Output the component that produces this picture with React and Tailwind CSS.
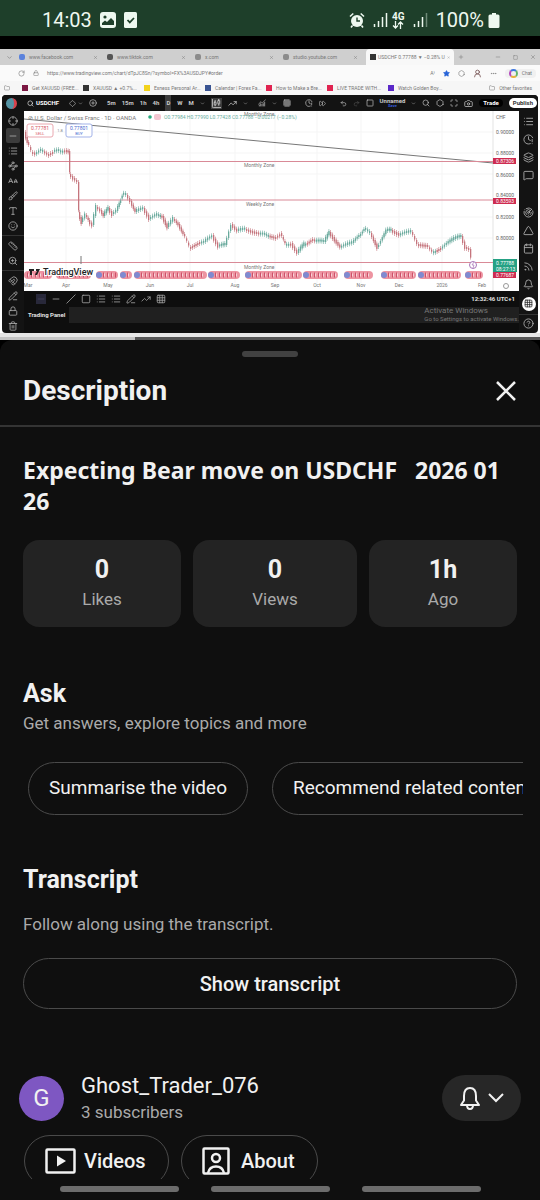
import {
    ALargeSmall, Bell, Brush, Calendar, Camera, ChartCandlestick, ChartNoAxesCombined, ChevronDown, CircleHelp,
    CirclePlus, ClockAlert, Crosshair, Diamond, Ellipsis, FastForward, Folder, Grid3x3, Hexagon, Layers, List, Lock,
    Magnet, Maximize, MessageSquare, Minus, PencilLine, Plus, Radar, Redo2, RotateCw, Rss, Ruler, Search, Slash,
    Smile, Square, Star, Trash2, Triangle, TrendingUp, Type, Undo2, UserRound, Waypoints, X, ZoomIn,
} from "lucide-react";

const tabs = [
    { title: "www.facebook.com", color: "bg-[#5b82dc]", width: "w-[88px]" },
    { title: "www.tiktok.com", color: "bg-[#555555]", width: "w-[88px]" },
    { title: "x.com", color: "bg-[#8c8c8c]", width: "w-[88px]" },
    { title: "studio.youtube.com", color: "bg-[#8c8c8c]", width: "w-[84px]" },
];

const bookmarks = [
    { title: "Get XAUUSD (FREE...", color: "bg-[#7b1742]" },
    { title: "XAUUSD ▲ +0.7%...", color: "bg-[#333333]" },
    { title: "Exness Personal Ar...", color: "bg-[#f2d21b]" },
    { title: "Calendar | Forex Fa...", color: "bg-[#3a5492]" },
    { title: "How to Make a Bre...", color: "bg-[#e02350]" },
    { title: "LIVE TRADE WITH...", color: "bg-[#e02350]" },
    { title: "Watch Golden Boy...", color: "bg-[#5a28c8]" },
];

const leftTools = [
    [Crosshair, Minus, List, Waypoints, ALargeSmall, Brush, Type, Smile],
    [Ruler, ZoomIn],
    [Magnet, PencilLine, Lock, Trash2],
];

const rightTools = [
    [List, ClockAlert, Layers, MessageSquare],
    [Radar, Triangle, Calendar, Rss, Bell],
];

const drawTools = [Minus, Minus, Slash, Square, List, List, PencilLine, TrendingUp, Grid3x3];

// x, y of the closing price along the year
const prices = [
    [25, 132], [28, 142], [32, 152], [36, 153], [42, 150], [48, 154], [54, 151], [60, 151], [66, 150], [69, 151],
    [70, 174], [74, 178], [78, 182], [79, 212], [82, 222], [86, 215], [89, 220], [93, 225], [97, 207], [101, 210],
    [104, 216], [109, 208], [113, 214], [117, 211], [120, 203], [123, 194], [127, 195], [131, 201], [136, 212],
    [144, 208], [150, 218], [158, 215], [163, 216], [168, 227], [174, 219], [179, 224], [184, 234], [190, 247],
    [199, 242], [205, 242], [213, 235], [219, 246], [226, 245], [232, 224], [238, 231], [246, 229], [256, 232],
    [264, 234], [275, 237], [281, 233], [286, 245], [292, 243], [298, 253], [305, 244], [312, 239], [325, 242],
    [330, 232], [341, 247], [353, 243], [360, 234], [365, 228], [371, 233], [378, 247], [387, 231], [392, 230],
    [400, 234], [412, 232], [418, 244], [427, 245], [433, 252], [440, 248], [455, 239], [462, 236], [466, 247],
    [470, 249], [472, 259],
];

const candles = [];
for (let i = 1; i < prices.length; i++) {
    const [x0, y0] = prices[i - 1];
    const [x1, y1] = prices[i];
    const steps = Math.max(1, Math.round((x1 - x0) / 2));
    for (let s = 0; s < steps; s++) {
        const wobble = Math.sin((i * 7 + s) * 12.9) * 2;
        const open = y0 + ((y1 - y0) * s) / steps;
        const close = y0 + ((y1 - y0) * (s + 1)) / steps + wobble;
        candles.push({
            x: x0 + ((x1 - x0) * s) / steps,
            top: Math.min(open, close),
            size: Math.max(2, Math.abs(close - open)),
            up: close < open,
        });
    }
}

const eventGroups = [[24, 52], [56, 91], [96, 118], [120, 132], [134, 207], [208, 240], [245, 302], [303, 338], [344, 373], [381, 416], [418, 461], [465, 483]];

const months = [["Mar", 28], ["Apr", 66], ["May", 108], ["Jun", 150], ["Jul", 190], ["Aug", 235], ["Sep", 275], ["Oct", 317], ["Nov", 361], ["Dec", 399], ["2026", 442], ["Feb", 482]];

const StatusBar = () => {
    return (
        <header className="h-9 bg-[#1e3f2a] text-[#eef8f0] flex items-center justify-between pl-[42px] pr-10">
            <div className="flex items-center gap-2 pt-1">
                <span className="text-xl leading-6">14:03</span>
                <svg width="16" height="16" viewBox="0 0 16 16">
                    <rect width="16" height="16" rx="3" fill="currentColor" />
                    <circle cx="5" cy="5" r="1.6" fill="#1e3f2a" />
                    <path d="M2 13V11l3-2.5 2 1.5 4-4 3 3v4z" fill="#1e3f2a" />
                </svg>
                <svg width="14" height="16" viewBox="0 0 14 16">
                    <rect width="13" height="16" rx="1.5" fill="currentColor" />
                    <path d="m3.5 8 2.3 2.4L10 6" fill="none" stroke="#1e3f2a" strokeWidth="1.8" />
                </svg>
            </div>
            <div className="flex items-center pt-1">
                <svg width="16" height="16" viewBox="0 0 16 16" className="mr-2">
                    <circle cx="8" cy="9" r="6" fill="currentColor" />
                    <path d="M1 4.5 4.3 1.5M15 4.5l-3.3-3M3.5 13.500 2 15.5M12.5 13.500 14 15.5" stroke="currentColor" strokeWidth="1.6" />
                    <path d="M8 5.5V9h3" fill="none" stroke="#1e3f2a" strokeWidth="1.4" />
                </svg>
                <svg width="15" height="16" viewBox="0 0 15 16" className="mr-1">
                    <path d="M1.5 12v3M5.5 9v6M9.5 5v10M13.5 1v14" stroke="currentColor" strokeWidth="1.5" />
                </svg>
                <span className="mr-2 flex flex-col items-center text-[10px] leading-[9px] font-bold">
                    4G
                    <svg width="12" height="8" viewBox="0 0 12 8">
                        <path d="M3.5 0v7M1 4.5 3.5 7 6 4.5M8.5 8V1M6 3.5 8.5 1 11 3.5" fill="none" stroke="currentColor" strokeWidth="1.3" />
                    </svg>
                </span>
                <svg width="15" height="16" viewBox="0 0 15 16" className="mr-2">
                    <path d="M1.5 12v3M5.5 9v6M9.5 5v10" stroke="currentColor" strokeWidth="1.5" />
                    <path d="M13.5 1v14" stroke="#6f8a78" strokeWidth="1.5" />
                </svg>
                <span className="text-xl leading-6 mr-1">100%</span>
                <svg width="12" height="15" viewBox="0 0 12 15">
                    <path d="M4 0h4v1.5h2A1.5 1.5 0 0 1 11.5 3v10.5A1.5 1.5 0 0 1 10 15H2a1.5 1.5 0 0 1-1.5-1.5V3A1.5 1.5 0 0 1 2 1.5h2z" fill="currentColor" />
                </svg>
            </div>
        </header>
    );
};

const BrowserBar = () => {
    return (
        <div className="text-[#777777] text-[5px] leading-[8px] whitespace-nowrap">
            <div className="h-4 bg-[#cfcfcf] flex items-center">
                <div className="w-[18px] shrink-0 flex justify-center"><ChevronDown size={7} /></div>
                {tabs.map((tab) => (
                    <div key={tab.title} className={`${tab.width} shrink-0 flex items-center gap-1 pr-2 pl-px`}>
                        <span className={`size-[6px] rounded-xs ${tab.color}`} />
                        <span className="flex-1">{tab.title}</span>
                        <X size={5} />
                    </div>
                ))}
                <div className="h-full w-[88px] shrink-0 rounded-t-sm bg-[#f8f8f8] flex items-center gap-[2px] px-1">
                    <span className="size-[6px] shrink-0 bg-[#333333]" />
                    <span className="flex-1">USDCHF 0.77788 ▼ −0.28% U</span>
                    <X size={5} />
                </div>
                <Plus size={6} className="ml-1" />
                <div className="ml-auto flex items-center gap-3 pr-1"><Minus size={6} /><Square size={5} /><X size={6} /></div>
            </div>
            <div className="h-4 bg-[#fafafa] flex items-center gap-2 pl-[18px] pr-1">
                <RotateCw size={7} />
                <Lock size={6} />
                <span className="flex-1">https://www.tradingview.com/chart/dTpJC8Sn/?symbol=FX%3AUSDJPY#order</span>
                <span>A⁾</span>
                <Star size={7} className="fill-[#2764d8] text-[#2764d8]" />
                <Hexagon size={7} />
                <UserRound size={9} className="text-[#6b4545]" />
                <Ellipsis size={7} />
                <div className="flex items-center gap-1 rounded-sm bg-[#f0f0f0] px-1">
                    <span className="size-[9px] rounded-full border-2 border-t-[#3c77df] border-r-[#62b56b] border-b-[#e7b13c] border-l-[#b44bbf]" />
                    Chat
                </div>
            </div>
            <div className="h-[14px] bg-[#f6f6f6] flex items-center pl-1">
                <Folder size={6} className="mr-3 shrink-0" />
                {bookmarks.map((mark) => (
                    <div key={mark.title} className="w-[61px] shrink-0 flex items-center gap-1">
                        <span className={`size-[6px] shrink-0 ${mark.color}`} />
                        {mark.title}
                    </div>
                ))}
                <span className="ml-auto flex shrink-0 items-center gap-1 pr-2"><Folder size={6} />Other favorites</span>
            </div>
        </div>
    );
};

const ChartToolbar = () => {
    return (
        <div className="h-4 bg-[#131313] text-[#c9c9c9] text-[6px] leading-[8px] font-bold flex items-center justify-between pl-1 pr-px whitespace-nowrap">
            <div className="flex items-center gap-[6px]">
                <span className="size-[11px] rounded-full bg-[#5594a5] border-r-3 border-[#d8434d]" />
                <span className="flex items-center gap-[2px] pl-1 text-white"><Search size={7} />USDCHF</span>
                <Diamond size={7} className="ml-1" />
                <ChevronDown size={5} className="-ml-1" />
                <CirclePlus size={8} />
                <span className="ml-1">5m</span>
                <span>15m</span>
                <span>1h</span>
                <span>4h</span>
                <span className="bg-[#3c3c3c] px-px py-1">D</span>
                <span>W</span>
                <span>M</span>
                <ChevronDown size={5} />
                <ChartCandlestick size={11} className="bg-[#3c3c3c]" />
                <TrendingUp size={9} />
                <ChevronDown size={5} />
                <ChartNoAxesCombined size={8} className="ml-1" />
                <ChevronDown size={5} />
                <Grid3x3 size={8} />
                <ClockAlert size={8} className="ml-2" />
                <FastForward size={7} />
                <Undo2 size={7} className="ml-2" />
                <Redo2 size={7} className="text-[#555555]" />
            </div>
            <div className="flex items-center gap-[6px]">
                <Square size={8} />
                <span className="flex flex-col items-center leading-[6px]">Unnamed<span className="text-[4px] leading-[4px] text-[#345cdf]">Save</span></span>
                <ChevronDown size={5} />
                <Search size={8} />
                <Hexagon size={8} />
                <Maximize size={8} />
                <Camera size={9} />
                <span className="rounded-full bg-black px-1 text-white">Trade</span>
                <span className="rounded-full bg-white px-1 py-px text-[#333333]">Publish</span>
            </div>
        </div>
    );
};

const PriceChart = () => {
    return (
        <svg viewBox="24 111 495 180" className="w-full bg-white" fontFamily="Roboto, sans-serif" fontSize="5">
            <path d="M66 111v172M108 111v172M150 111v172M190 111v172M235 111v172M275 111v172M317 111v172M361 111v172M399 111v172M442 111v172M24 132h469M24 153h469M24 174h469M24 217h469M24 238h469" stroke="#f5f5f5" />
            <path d="M493 111v180" stroke="#e3e3e3" />
            <path d="M24 119 493 163" stroke="#777777" />
            <path d="M24 161.5h469M24 200h469M24 262.5h469" stroke="#d98a97" />
            {candles.map((c, i) => (
                <g key={i} fill={c.up ? "#68a99c" : "#c5757d"}>
                    <rect x={c.x + 0.3} y={c.top - 2} width="0.6" height={c.size + 4} />
                    <rect x={c.x} y={c.top} width="1.3" height={c.size} />
                </g>
            ))}
            <path d="M81 256v8" stroke="#777777" />
            <g fill="#777777">
                <text x="244" y="116">Monthly Zone</text>
                <text x="244" y="167">Monthly Zone</text>
                <text x="246" y="206">Weekly Zone</text>
                <text x="244" y="269">Monthly Zone</text>
            </g>
            <text x="28" y="120" fontSize="6" fill="#777777">⊘ U.S. Dollar / Swiss Franc · 1D · OANDA</text>
            <circle cx="150" cy="117" r="1.8" fill="#28aa7d" />
            <rect x="154" y="114" width="7" height="6" rx="2" fill="#f3c5d0" />
            <text x="164" y="119" fill="#68ad9e">O0.77984 H0.77990 L0.77428 C0.77788 −0.00217 (−0.28%)</text>
            <g fill="white">
                <rect x="27" y="124" width="26" height="13" rx="2" stroke="#eaa8b0" />
                <rect x="66" y="124" width="26" height="13" rx="2" stroke="#a3b3e9" />
            </g>
            <g textAnchor="middle">
                <text x="40" y="130" fill="#d65362">0.77781</text>
                <text x="40" y="135" fill="#d65362" fontSize="4">SELL</text>
                <text x="60" y="132" fill="#888888" fontSize="4">1.8</text>
                <text x="79" y="130" fill="#4968cf">0.77801</text>
                <text x="79" y="135" fill="#4968cf" fontSize="4">BUY</text>
            </g>
            {eventGroups.map(([from, to]) => (
                <g key={from}>
                    <rect x={from} y="271" width={to - from} height="8" rx="4" fill="#ed94a1" />
                    <path d={`M${from + 3} 275H${to - 2}`} stroke="#cd5069" strokeWidth="5" strokeDasharray="1 3" />
                    <path d={`M${from + 4} 275H${to - 2}`} stroke="#ffffff" strokeWidth="3" strokeDasharray="1 3" opacity="0.6" />
                    {from > 90 && <circle cx={from + 3} cy="275" r="3" fill="#7f8ad0" />}
                </g>
            ))}
            <path d="M29 269h5v2h-2v4h-2v-4h-1zM36 269h4l-3 6h-2l2-4h-1z" fill="#222222" />
            <text x="43" y="275" fontSize="9" fontWeight="500" fill="#222222" stroke="#ffffff" strokeWidth="2" paintOrder="stroke">TradingView</text>
            <circle cx="473" cy="265" r="3.5" fill="white" stroke="#a875b8" />
            <path d="m474 262-2 3h2l-1 3" fill="none" stroke="#a875b8" strokeWidth="0.7" />
            <g fill="#777777" textAnchor="middle">
                {months.map(([label, x]) => (
                    <text key={label} x={x} y="287">{label}</text>
                ))}
            </g>
            <circle cx="506" cy="286" r="2.5" fill="none" stroke="#999999" />
            <g fill="#666666">
                <text x="496" y="119">CHF</text>
                <text x="496" y="134">0.90000</text>
                <text x="496" y="155">0.88000</text>
                <text x="496" y="177">0.86000</text>
                <text x="496" y="197">0.84000</text>
                <text x="496" y="219">0.82000</text>
                <text x="496" y="240">0.80000</text>
            </g>
            <path d="M493 158h23v6h-23zM493 198h23v6h-23zM493 272h23v6h-23z" fill="#ce2b50" />
            <path d="M493 259h24v13h-24z" fill="#25a184" />
            <g fill="white">
                <text x="496" y="163">0.87306</text>
                <text x="496" y="203">0.83593</text>
                <text x="496" y="265">0.77788</text>
                <text x="496" y="271">08:27:13</text>
                <text x="496" y="277">0.77687</text>
            </g>
        </svg>
    );
};

const ChartFooter = () => {
    return (
        <div className="flex-1 flex flex-col bg-[#0e0e0e] text-[#e1e1e1] text-[6px] leading-[8px]">
            <div className="h-4 flex items-center gap-[5px] pl-3 pr-1">
                {drawTools.map((Icon, i) => (
                    <Icon key={i} size={10} className={i === 0 ? "bg-[#28283a] text-[#45455e]" : "text-[#a0a0a0]"} />
                ))}
                <span className="ml-auto font-bold">12:32:46 UTC+1</span>
            </div>
            <div className="h-4 bg-[#202020] flex items-start justify-between">
                <span className="bg-[#0e0e0e] px-1 py-1 font-bold">Trading Panel</span>
                <span className="text-[#777777] whitespace-nowrap">
                    <span className="block text-[8px]">Activate Windows</span>
                    <span className="block">Go to Settings to activate Windows.</span>
                </span>
            </div>
        </div>
    );
};

const Video = () => {
    return (
        <section className="bg-white" aria-label="Video">
            <BrowserBar />
            <div className="mx-[2px] flex flex-col rounded-sm overflow-hidden bg-[#131313]">
                <ChartToolbar />
                <div className="flex text-[#a9a9a9]">
                    <div className="w-[22px] shrink-0 pt-[2px] flex flex-col">
                        {leftTools.map((group, g) => (
                            <div key={g} className={g > 0 ? "border-t border-[#333333] mt-[2px] pt-[2px]" : ""}>
                                {group.map((Icon, i) => (
                                    <div key={i} className={g === 0 && i === 1 ? "h-[15px] mx-1 rounded-xs bg-[#3c3c3c] flex items-center justify-center" : "h-[15px] flex items-center justify-center"}>
                                        <Icon size={10} />
                                    </div>
                                ))}
                            </div>
                        ))}
                    </div>
                    <div className="flex-1 min-w-0 flex flex-col">
                        <PriceChart />
                        <ChartFooter />
                    </div>
                    <div className="w-[19px] shrink-0 py-px flex flex-col justify-between">
                        {rightTools.map((group, g) => (
                            <div key={g} className={g > 0 ? "mt-4" : ""}>
                                {group.map((Icon, i) => (
                                    <div key={i} className="h-[18px] flex items-center justify-center"><Icon size={11} /></div>
                                ))}
                            </div>
                        ))}
                        <div className="mx-auto size-[14px] rounded-full bg-white text-[#222222] flex items-center justify-center"><Grid3x3 size={9} /></div>
                        <div className="h-[18px] border-t border-[#333333] flex items-center justify-center"><CircleHelp size={11} /></div>
                    </div>
                </div>
            </div>
            <div className="h-1 bg-[#e6e6e6]" />
            <div className="h-[3px] bg-[#555555]">
                <div className="h-full w-1/4 bg-[#c4c4c4]" />
            </div>
        </section>
    );
};

const Stat = ({ value, label }) => {
    return (
        <div className="h-[87px] rounded-2xl bg-[#232323] flex flex-col items-center pt-[15px]">
            <span className="text-[25px] leading-[30px] font-bold">{value}</span>
            <span className="text-[17px] leading-7 text-[#aaaaaa]">{label}</span>
        </div>
    );
};

const Channel = () => {
    return (
        <section className="pt-[63px]">
            <div className="flex items-center px-[19px]">
                <div className="size-[45px] rounded-full bg-[#7e57c2] flex items-center justify-center text-2xl">G</div>
                <div className="pl-[17px] flex-1">
                    <div className="text-[22px] leading-7">Ghost_Trader_076</div>
                    <div className="text-[17px] leading-6 text-[#aaaaaa]">3 subscribers</div>
                </div>
                <button aria-label="Notifications" className="h-[46px] w-[79px] rounded-full bg-[#272727] flex items-center justify-center gap-2">
                    <svg width="20" height="23" viewBox="0 0 20 23" fill="none" stroke="currentColor" strokeWidth="2" strokeLinejoin="round">
                        <path d="M4 9c0-5 2.300-8 6-8s6 3 6 8v4.500l3 4.500H1l3-4.500z" />
                        <path d="M7 18c0 2.500 1 4 3 4s3-1.500 3-4" />
                    </svg>
                    <svg width="16" height="10" viewBox="0 0 16 10" fill="none" stroke="currentColor" strokeWidth="2">
                        <path d="m1 1 7 7 7-7" />
                    </svg>
                </button>
            </div>
            <div className="h-[55px] pt-[11px] pl-6 flex gap-3 overflow-hidden text-xl font-medium">
                <button className="h-[52px] w-[145px] shrink-0 rounded-full border border-[#4a4a4a] flex items-center pl-5 gap-2">
                    <svg width="31" height="26" viewBox="0 0 31 26">
                        <rect x="1.5" y="1.5" width="28" height="23" rx="1" fill="none" stroke="currentColor" strokeWidth="2.5" />
                        <path d="M12 7.5v11l9-5.5z" fill="currentColor" />
                    </svg>
                    Videos
                </button>
                <button className="h-[52px] w-[137px] shrink-0 rounded-full border border-[#4a4a4a] flex items-center pl-5 gap-[11px]">
                    <svg width="28" height="28" viewBox="0 0 28 28" fill="none" stroke="currentColor" strokeWidth="2.5">
                        <rect x="1.5" y="1.5" width="25" height="25" rx="1" />
                        <circle cx="14" cy="11" r="4" />
                        <path d="M6 26c1-4.5 4-6.5 8-6.5s7 2 8 6.5" />
                    </svg>
                    About
                </button>
            </div>
        </section>
    );
};

const App = () => {
    return (
        <div className="min-h-screen flex flex-col bg-black text-[#f1f1f1] font-[Roboto,sans-serif]">
            <StatusBar />
            <div className="pt-[13px]">
                <Video />
            </div>
            <main className="flex-1 flex flex-col rounded-t-xl bg-[#0f0f0f]">
                <div className="mx-auto mt-[11px] h-[6px] w-14 rounded-full bg-[#414141]" />
                <div className="h-[70px] flex items-center justify-between pl-[23px] pr-6 border-b-2 border-[#343434]">
                    <h1 className="text-[28px] leading-8 font-bold">Description</h1>
                    <button aria-label="Close">
                        <svg width="20" height="20" viewBox="0 0 20 20" stroke="currentColor" strokeWidth="2.5">
                            <path d="m1 1 18 18M19 1 1 19" />
                        </svg>
                    </button>
                </div>
                <div className="px-[23px]">
                    <h2 className="pt-7 -mr-2 text-[23px] leading-[31px] font-bold font-['Noto_Sans',sans-serif] whitespace-pre-wrap">Expecting Bear move on USDCHF   2026 01 26</h2>
                    <div className="mt-[23px] grid grid-cols-[158fr_164fr_148fr] gap-3">
                        <Stat value="0" label="Likes" />
                        <Stat value="0" label="Views" />
                        <Stat value="1h" label="Ago" />
                    </div>
                    <h2 className="mt-[52px] text-[25px] leading-[30px] font-bold">Ask</h2>
                    <p className="mt-[2px] text-[17px] leading-6 text-[#aaaaaa]">Get answers, explore topics and more</p>
                </div>
                <div className="mt-[27px] ml-[28px] mr-[17px] flex gap-6 overflow-hidden text-[19px] whitespace-nowrap">
                    <button className="h-[53px] shrink-0 px-5 rounded-full border border-[#4a4a4a]">Summarise the video</button>
                    <button className="h-[53px] shrink-0 px-5 rounded-full border border-[#4a4a4a]">Recommend related content</button>
                </div>
                <div className="px-[23px]">
                    <h2 className="mt-[50px] text-[25px] leading-[30px] font-bold">Transcript</h2>
                    <p className="mt-[17px] text-[17px] leading-6 text-[#aaaaaa]">Follow along using the transcript.</p>
                    <button className="mt-[22px] h-[51px] w-full rounded-full border border-[#4a4a4a] text-xl font-medium">Show transcript</button>
                </div>
                <Channel />
                <div className="pt-[7px] pb-2 flex justify-center gap-8">
                    <span className="h-[6px] w-[119px] rounded-full bg-[#6c6c6c]" />
                    <span className="h-[6px] w-[119px] rounded-full bg-[#6c6c6c]" />
                    <span className="h-[6px] w-[119px] rounded-full bg-[#6c6c6c]" />
                </div>
            </main>
        </div>
    );
};

export default App;
